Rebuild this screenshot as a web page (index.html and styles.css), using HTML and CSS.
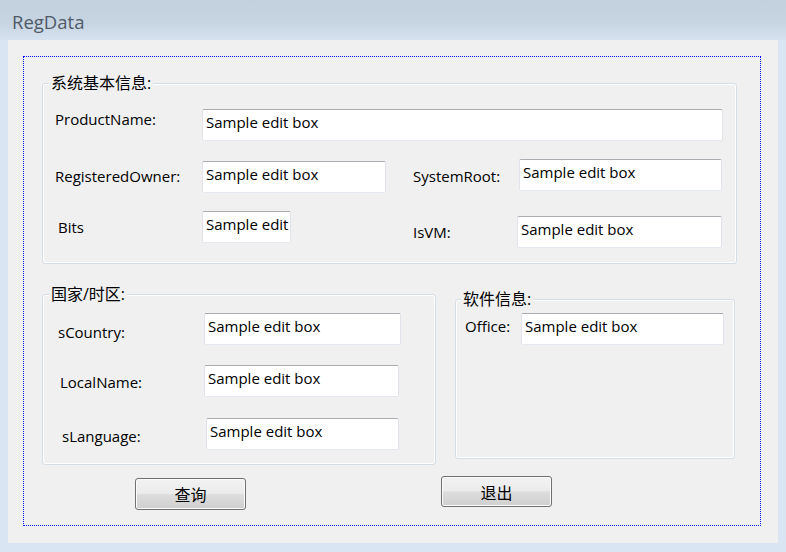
FILE: index.html
```html
<!DOCTYPE html>
<html lang="zh">
<head>
<meta charset="utf-8">
<title>RegData</title>
<link rel="stylesheet" href="styles.css">
</head>
<body>
<div class="window">
  <div class="titlebar">RegData</div>
  <div class="client">
    <div class="focusframe">
      <div class="group group-system">
        <div class="legend">系统基本信息:</div>
        <div class="row r1">
          <span class="label l-product">ProductName:</span>
          <div class="edit e-product">Sample edit box</div>
        </div>
        <div class="row r2">
          <span class="label l-owner">RegisteredOwner:</span>
          <div class="edit e-owner">Sample edit box</div>
          <span class="label l-root">SystemRoot:</span>
          <div class="edit e-root">Sample edit box</div>
        </div>
        <div class="row r3">
          <span class="label l-bits">Bits</span>
          <div class="edit e-bits">Sample edit</div>
          <span class="label l-vm">IsVM:</span>
          <div class="edit e-vm">Sample edit box</div>
        </div>
      </div>

      <div class="groups-row">
        <div class="group group-country">
          <div class="legend">国家/时区:</div>
          <div class="row r4">
            <span class="label l-country">sCountry:</span>
            <div class="edit e-country">Sample edit box</div>
          </div>
          <div class="row r5">
            <span class="label l-local">LocalName:</span>
            <div class="edit e-local">Sample edit box</div>
          </div>
          <div class="row r6">
            <span class="label l-lang">sLanguage:</span>
            <div class="edit e-lang">Sample edit box</div>
          </div>
        </div>

        <div class="group group-soft">
          <div class="legend legend-soft">软件信息:</div>
          <div class="row r7">
            <span class="label l-office">Office:</span>
            <div class="edit e-office">Sample edit box</div>
          </div>
        </div>
      </div>

      <div class="buttons">
        <button class="btn btn-query">查询</button>
        <button class="btn btn-exit">退出</button>
      </div>
    </div>
  </div>
</div>
</body>
</html>
```

FILE: styles.css
```css
* { box-sizing: border-box; }

html, body {
  margin: 0;
  padding: 0;
}

body {
  width: 786px;
  height: 552px;
  overflow: hidden;
  background: #d9e5f2;
  font-family: "Open Sans", "Noto Sans CJK SC", sans-serif;
  font-size: 15px;
  color: #000;
}

.titlebar {
  height: 40px;
  padding: 10px 0 0 12px;
  font-size: 18.5px;
  line-height: 24px;
  color: #4f5a67;
  background: linear-gradient(to bottom, #c3d0dd 0%, #c6d3e1 55%, #d6e2ef 100%);
}

.client {
  margin: 0 8px;
  height: 503px;
  background: #f0f0f0;
  padding: 16px 0 0 15px;
}

.focusframe {
  width: 738px;
  height: 470px;
  border: 1px dotted #0000ff;
  padding: 26px 0 0 18px;
}

.group {
  border: 1px solid #d5dde6;
  border-radius: 3px;
  box-shadow: inset 0 0 0 1px #ffffff;
}

.legend {
  width: fit-content;
  margin: -10px 0 0 6px;
  padding: 0 2px;
  height: 18px;
  line-height: 18px;
  font-size: 16px;
  background: #f0f0f0;
}

.legend-soft { margin-left: 5px; }

.row {
  display: flex;
  align-items: flex-start;
}

.label {
  display: block;
  flex: none;
  line-height: 20px;
  white-space: nowrap;
}

.edit {
  flex: none;
  height: 32px;
  padding: 2px 3px 8px 3px;
  line-height: 20px;
  background: #ffffff;
  border: 1px solid;
  border-color: #abadb3 #e2e3ea #e3e9ef #e2e3ea;
  border-radius: 2px;
  white-space: nowrap;
  overflow: hidden;
}

/* group 1 */
.group-system { width: 695px; height: 181px; }

.r1 { margin-top: 17px; }
.l-product { margin-left: 12px; width: 147px; }
.e-product { width: 521px; }

.r2 { margin-top: 18px; }
.l-owner { margin-left: 12px; width: 147px; margin-top: 7px; }
.e-owner { width: 184px; margin-top: 2px; }
.l-root { margin-left: 27px; width: 106px; margin-top: 7px; }
.e-root { width: 203px; }

.r3 { margin-top: 18px; }
.l-bits { margin-left: 15px; width: 144px; margin-top: 6px; }
.e-bits { width: 89px; padding-right: 1px; }
.l-vm { margin-left: 122px; width: 104px; margin-top: 11px; }
.e-vm { width: 205px; margin-top: 5px; }

/* lower groups */
.groups-row {
  display: flex;
  align-items: flex-start;
  margin-top: 30px;
}

.group-country { width: 394px; height: 171px; flex: none; }
.group-soft { width: 280px; height: 160px; flex: none; margin: 5px 0 0 19px; }

.r4 { margin-top: 10px; }
.l-country { margin-left: 15px; width: 146px; margin-top: 9px; }
.e-country { width: 197px; }

.r5 { margin-top: 20px; }
.l-local { margin-left: 17px; width: 144px; margin-top: 7px; }
.e-local { width: 195px; }

.r6 { margin-top: 21px; }
.l-lang { margin-left: 19px; width: 144px; margin-top: 8px; }
.e-lang { width: 193px; }

.r7 { margin-top: 5px; }
.l-office { margin-left: 9px; width: 56px; margin-top: 3px; }
.e-office { width: 203px; }

/* buttons */
.buttons {
  display: flex;
  align-items: flex-start;
  margin-top: 11px;
}

.btn {
  flex: none;
  width: 111px;
  padding: 0;
  font-family: "Noto Sans CJK SC", sans-serif;
  font-size: 16px;
  line-height: 20px;
  color: #000;
  border: 1px solid #707070;
  border-radius: 3px;
  background: linear-gradient(to bottom, #f2f2f2 0%, #ebebeb 48%, #dddddd 52%, #cfcfcf 100%);
  box-shadow: inset 0 0 0 1px #fbfbfb;
}

.btn-query { height: 32px; margin: 2px 0 0 93px; }
.btn-exit { height: 31px; margin-left: 195px; }
```
